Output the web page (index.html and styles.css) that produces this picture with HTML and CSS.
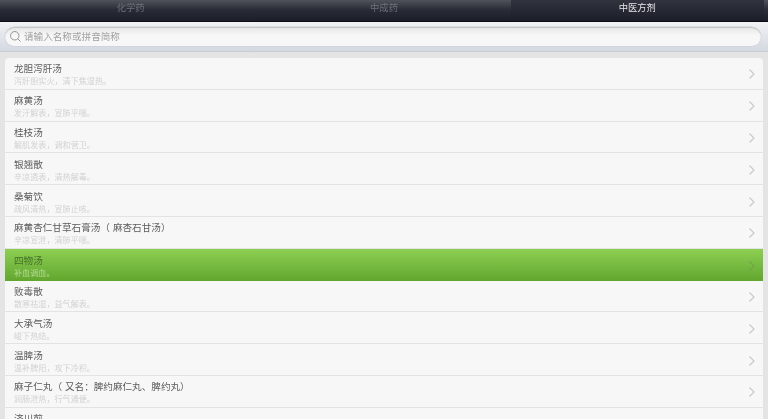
FILE: index.html
```html
<!DOCTYPE html>
<html lang="zh-CN">
<head>
    <meta charset="UTF-8">
    <meta name="viewport" content="width=device-width, initial-scale=1.0">
    <title>方剂</title>
    <link rel="stylesheet" href="styles.css">
</head>
<body>

    <div class="tabs">
        <div class="tab">化学药</div>
        <div class="tab">中成药</div>
        <div class="tab active">中医方剂</div>
    </div>

    <div class="search">
        <div class="search-box">
            <svg class="search-icon" width="11" height="11" viewBox="0 0 13 13"><circle cx="5.6" cy="5.6" r="5"/><path d="M9.2 9.2L12.5 12.5"/></svg>
            <span>请输入名称或拼音简称</span>
        </div>
    </div>

    <div class="list">
        <div class="row"><div class="text"><div class="name">龙胆泻肝汤</div><div class="desc">泻肝胆实火，清下焦湿热。</div></div><svg class="arrow" width="7" height="12" viewBox="0 0 7 12"><path d="M1.5 1.5l4.5 4.5-4.5 4.5"/></svg></div>
        <div class="row"><div class="text"><div class="name">麻黄汤</div><div class="desc">发汗解表，宣肺平喘。</div></div><svg class="arrow" width="7" height="12" viewBox="0 0 7 12"><path d="M1.5 1.5l4.5 4.5-4.5 4.5"/></svg></div>
        <div class="row"><div class="text"><div class="name">桂枝汤</div><div class="desc">解肌发表，调和营卫。</div></div><svg class="arrow" width="7" height="12" viewBox="0 0 7 12"><path d="M1.5 1.5l4.5 4.5-4.5 4.5"/></svg></div>
        <div class="row"><div class="text"><div class="name">银翘散</div><div class="desc">辛凉透表，清热解毒。</div></div><svg class="arrow" width="7" height="12" viewBox="0 0 7 12"><path d="M1.5 1.5l4.5 4.5-4.5 4.5"/></svg></div>
        <div class="row"><div class="text"><div class="name">桑菊饮</div><div class="desc">疏风清热，宣肺止咳。</div></div><svg class="arrow" width="7" height="12" viewBox="0 0 7 12"><path d="M1.5 1.5l4.5 4.5-4.5 4.5"/></svg></div>
        <div class="row"><div class="text"><div class="name">麻黄杏仁甘草石膏汤<span class="paren">（</span>麻杏石甘汤）</div><div class="desc">辛凉宣泄，清肺平喘。</div></div><svg class="arrow" width="7" height="12" viewBox="0 0 7 12"><path d="M1.5 1.5l4.5 4.5-4.5 4.5"/></svg></div>
        <div class="row selected"><div class="text"><div class="name">四物汤</div><div class="desc">补血调血。</div></div><svg class="arrow" width="7" height="12" viewBox="0 0 7 12"><path d="M1.5 1.5l4.5 4.5-4.5 4.5"/></svg></div>
        <div class="row"><div class="text"><div class="name">败毒散</div><div class="desc">散寒祛湿，益气解表。</div></div><svg class="arrow" width="7" height="12" viewBox="0 0 7 12"><path d="M1.5 1.5l4.5 4.5-4.5 4.5"/></svg></div>
        <div class="row"><div class="text"><div class="name">大承气汤</div><div class="desc">峻下热结。</div></div><svg class="arrow" width="7" height="12" viewBox="0 0 7 12"><path d="M1.5 1.5l4.5 4.5-4.5 4.5"/></svg></div>
        <div class="row"><div class="text"><div class="name">温脾汤</div><div class="desc">温补脾阳，攻下冷积。</div></div><svg class="arrow" width="7" height="12" viewBox="0 0 7 12"><path d="M1.5 1.5l4.5 4.5-4.5 4.5"/></svg></div>
        <div class="row"><div class="text"><div class="name">麻子仁丸<span class="paren">（</span>又名：脾约麻仁丸、脾约丸）</div><div class="desc">润肠泄热，行气通便。</div></div><svg class="arrow" width="7" height="12" viewBox="0 0 7 12"><path d="M1.5 1.5l4.5 4.5-4.5 4.5"/></svg></div>
        <div class="row"><div class="text"><div class="name">济川煎</div><div class="desc"></div></div><svg class="arrow" width="7" height="12" viewBox="0 0 7 12"><path d="M1.5 1.5l4.5 4.5-4.5 4.5"/></svg></div>
    </div>

</body>
</html>
```
FILE: styles.css
```css
html, body {
    height: 100%;
}
body {
    margin: 0;
    overflow: hidden;
    font-family: "Noto Sans CJK SC", "Liberation Sans", sans-serif;
    text-spacing-trim: space-all;
    background: #e4e4e4;
}
.tabs {
    display: flex;
    height: 21px;
    padding: 0 4px;
    border-bottom: 1px solid #0c0d12;
    background: linear-gradient(#50525b, #2a2d37 45%, #1b1e28);
    filter: blur(0.3px);
}
.tab {
    flex: 1;
    color: #6e7078;
    font-size: 9.3px;
    line-height: 14px;
    padding-bottom: 7px;
    text-align: center;
}
.tab.active {
    color: #e6e6e8;
    background: linear-gradient(#31343e, #1b1e29);
}
.search {
    height: 24px;
    padding: 5px 7px 0 5px;
    border-bottom: 1px solid #c9ced6;
    background: linear-gradient(#f1f2f5, #d4d8e0);
}
.search-box {
    display: flex;
    align-items: center;
    gap: 3px;
    height: 19px;
    padding-left: 5px;
    border-radius: 10px;
    background: linear-gradient(#e6e6e6, #f7f7f7 45%);
    box-shadow: inset 0 1px 1px #c4c4c4, 0 0 0 .5px #c8ccd2;
    color: #a0a0a0;
    font-size: 9.6px;
    filter: blur(0.3px);
}
.search-box span {
    padding-bottom: 1px;
}
.search-icon {
    fill: none;
    stroke: #8e8e8e;
    stroke-width: 1.1;
}
.list {
    margin: 6px 5px 0;
    border-radius: 4px 4px 0 0;
    background: #f7f7f7;
    overflow: hidden;
}
.row {
    display: flex;
    align-items: center;
    justify-content: space-between;
    height: 31.8px;
    box-sizing: border-box;
    padding: 0 8px 0 9px;
    border-bottom: 1px solid #e3e3e3;
}
.text {
    padding-top: 3px;
    filter: blur(0.3px);
}
.name {
    color: #5c5c5c;
    font-size: 9.6px;
    line-height: 13px;
}
.paren {
    padding-right: 3px;
}
.desc {
    min-height: 12px;
    color: #d2d2d2;
    font-size: 8.1px;
    line-height: 12px;
}
.arrow {
    margin-top: 2px;
    fill: none;
    stroke: #c8c8c8;
    stroke-width: 1.1;
}
.row.selected {
    border-bottom: none;
    background: linear-gradient(#8ccf52, #62a62f);
}
.row.selected .name {
    color: #44702a;
}
.row.selected .desc {
    color: #b5dc94;
}
.row.selected .arrow {
    stroke: #6fa548;
}
```
